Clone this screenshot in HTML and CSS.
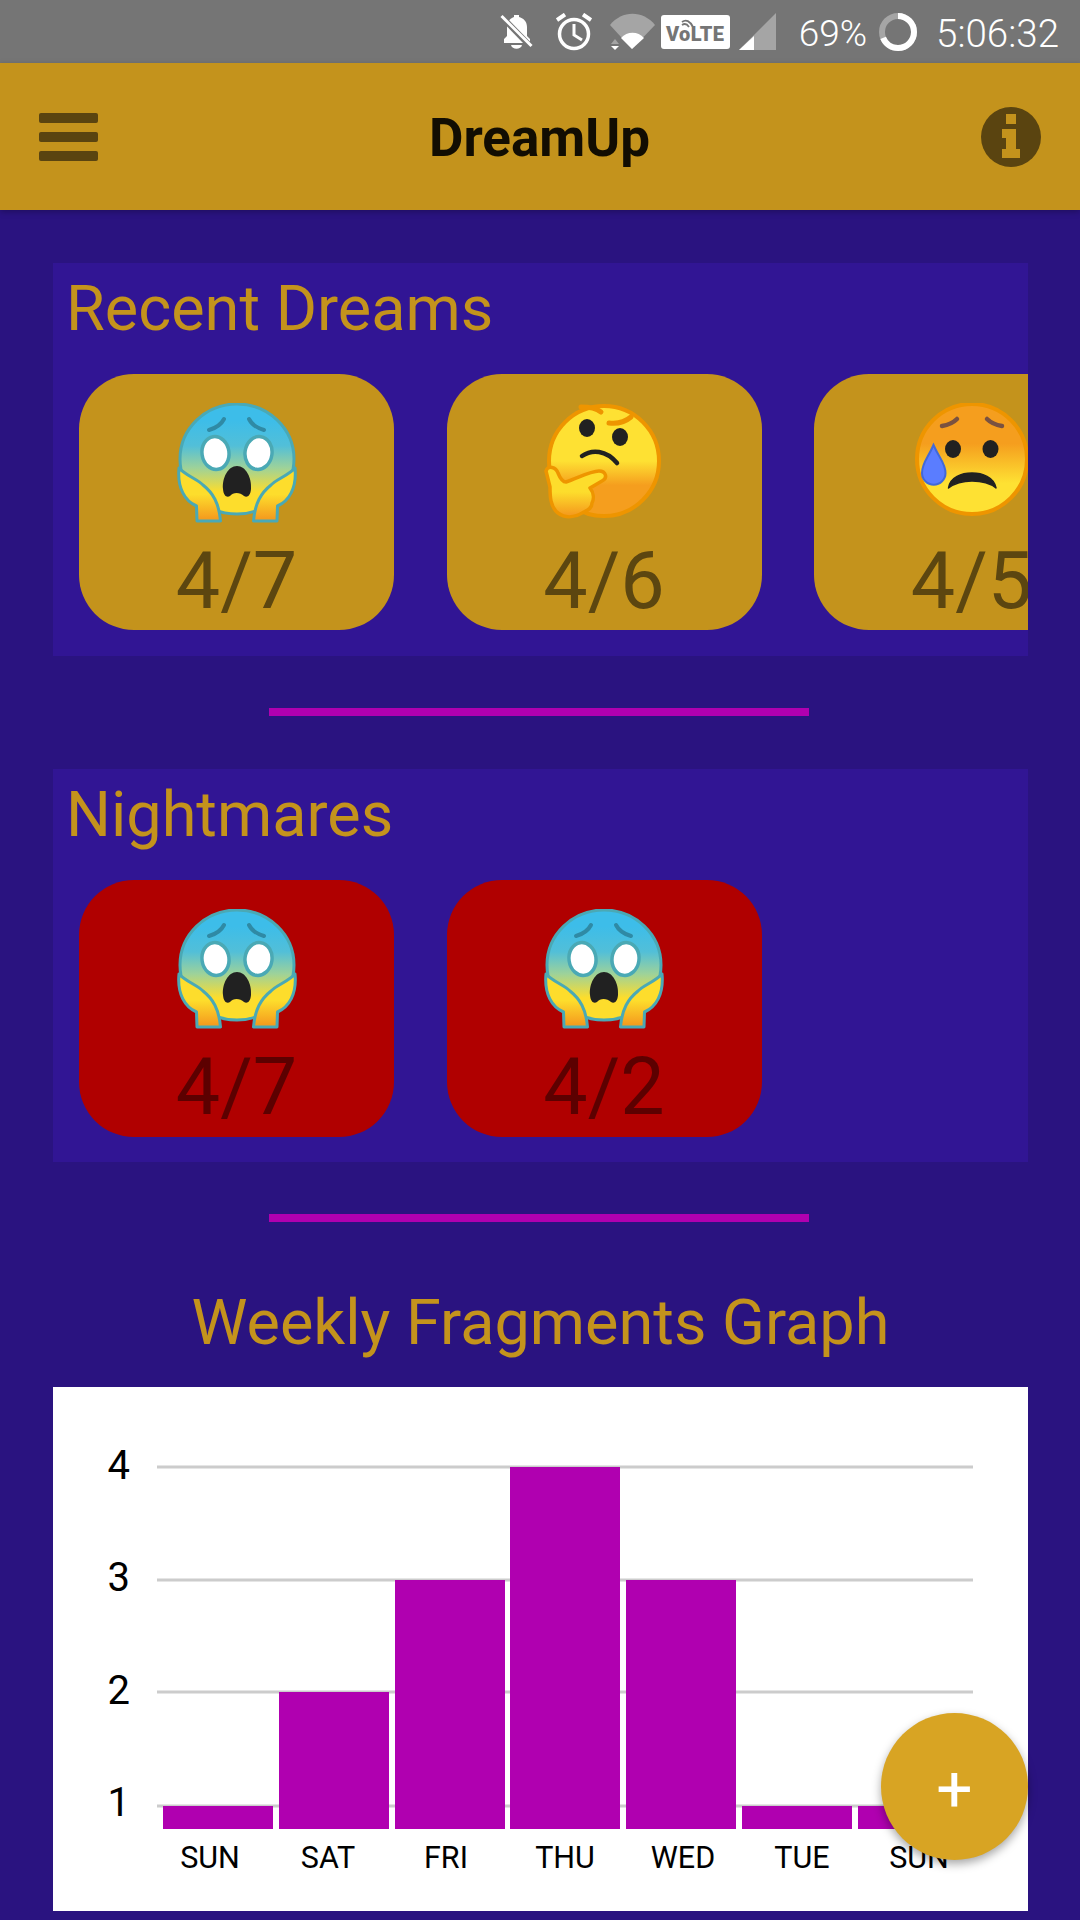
FILE: index.html
```html
<!DOCTYPE html>
<html lang="en">
<head>
  <meta charset="UTF-8" />
  <meta name="viewport" content="width=device-width, initial-scale=1.0" />
  <title>DreamUp</title>
  <link rel="stylesheet" href="styles.css">
</head>
<body>
  <!-- emoji faces, reused by the cards -->
  <svg class="defs" width="0" height="0">
    <defs>
      <linearGradient id="fearFace" x1="0" y1="0" x2="0" y2="1">
        <stop offset="0.15" stop-color="#3dbde9" />
        <stop offset="0.38" stop-color="#52bfd8" />
        <stop offset="0.58" stop-color="#9dd29a" />
        <stop offset="0.8" stop-color="#fddd2c" />
      </linearGradient>
      <linearGradient id="fearHand" x1="0" y1="0" x2="0" y2="1">
        <stop offset="0.5" stop-color="#fddd2c" />
        <stop offset="0.95" stop-color="#f59d1e" />
      </linearGradient>
      <linearGradient id="thinkFace" x1="0" y1="0" x2="0" y2="1">
        <stop offset="0.5" stop-color="#fee133" />
        <stop offset="0.72" stop-color="#f59e1e" />
      </linearGradient>
      <linearGradient id="sadFace" x1="0" y1="0" x2="0" y2="1">
        <stop offset="0.36" stop-color="#f59e1e" />
        <stop offset="0.72" stop-color="#fee133" />
      </linearGradient>

      <symbol id="fear" viewBox="0 0 120 120">
        <ellipse cx="60" cy="56" rx="57" ry="55" fill="url(#fearFace)" stroke="#4aa9b5" stroke-width="3" />
        <path d="M32 27 C39 25 44 22 47 16 M87 27 C80 25 75 22 72 16" fill="none" stroke="#2f8aa5" stroke-width="4" stroke-linecap="round" />
        <ellipse cx="38.5" cy="50" rx="13.500" ry="16.500" transform="rotate(-8 38.5 50)" fill="#fff" stroke="#4aa9b5" stroke-width="3.500" />
        <ellipse cx="81.5" cy="50" rx="13.500" ry="16.500" transform="rotate(8 81.5 50)" fill="#fff" stroke="#4aa9b5" stroke-width="3.500" />
        <path d="M60 63 C69 63 75 75 74 86 C73.500 93 70 95 67 93 C63 89 56 89 53 93 C50 95 46.500 93 46 86 C45 75 51 63 60 63 Z" fill="#212121" />
        <path id="fearHandL" d="M2 65 C8 72 20 76 26 82 C36 90 42 100 43.500 118 L20 118 L19.500 103 C8 98 0 85 2 65 Z" fill="url(#fearHand)" stroke="#4aa9b5" stroke-width="3" stroke-linejoin="round" />
        <use href="#fearHandL" transform="translate(120 0) scale(-1 1)" />
      </symbol>

      <symbol id="think" viewBox="0 0 120 120">
        <circle cx="60" cy="58" r="55" fill="url(#thinkFace)" stroke="#ee9500" stroke-width="4" />
        <path d="M37 4 C44 4 52 5 57 9 M65 20 C73 21 81 19 87 14" fill="none" stroke="#ee9500" stroke-width="5" stroke-linecap="round" />
        <ellipse cx="43" cy="25" rx="8" ry="9" fill="#212121" />
        <ellipse cx="76" cy="34" rx="8" ry="9" fill="#212121" />
        <path d="M38 53 C48 46 62 47 73 60" fill="none" stroke="#212121" stroke-width="4.500" stroke-linecap="round" />
        <path d="M2 68 C4 62 12 64 14 70 C16 75 18 79 22 79 C32 76 46 68 55 68 C62 68 64 75 58 78 L46 85 C50 90 50 96 48 100 C48 105 44 107 40 109 C32 114 22 116 14 110 C6 104 6 92 6 84 Z" fill="url(#fearHand)" stroke="#ee9500" stroke-width="3.500" stroke-linejoin="round" />
      </symbol>

      <symbol id="sad" viewBox="0 0 120 120">
        <circle cx="60" cy="56" r="55" fill="url(#sadFace)" stroke="#ee9500" stroke-width="4" />
        <path d="M30 23 C36 22 41 20 45 16 M75 16 C79 20 84 22 90 23" fill="none" stroke="#7a5240" stroke-width="4.500" stroke-linecap="round" />
        <ellipse cx="41" cy="46" rx="8" ry="9" fill="#212121" />
        <ellipse cx="78.500" cy="46" rx="8" ry="9" fill="#212121" />
        <path d="M36.500 85 C38 74 50 70 60 70 C70 70 82 74 84 85 C78 80 70 78 60 78 C50 78 43 80 36.500 85 Z" fill="#212121" stroke="#212121" stroke-width="1.500" stroke-linejoin="round" />
        <path d="M21.500 42 C16 55 10 60 10 70 A11.700 11.700 0 0 0 33.500 70 C33.500 60 27 55 21.500 42 Z" fill="#5a7dff" stroke="#4169d8" stroke-width="2" />
      </symbol>
    </defs>
  </svg>

  <div class="status-bar">
    <svg class="st-bell" width="33" height="38" viewBox="0 0 33 38">
      <path d="M4 26 L7 23 L7 14 C7 8 11 5 14 4 L14 2 L19 2 L19 4 C23 5 27 8 27 14 L27 23 L30 26 L30 30 L4 30 Z" fill="#fff" />
      <path d="M11 32 L22 32 C21 37 12 37 11 32 Z" fill="#fff" />
      <path d="M2 4 L31 34" stroke="#757575" stroke-width="6" />
      <path d="M1.500 3 L31.500 33" stroke="#fff" stroke-width="3" />
    </svg>
    <svg class="st-alarm" width="36" height="38" viewBox="0 0 36 38">
      <circle cx="18" cy="21" r="14.500" fill="none" stroke="#fff" stroke-width="3.500" />
      <path d="M18 11 L18 22 L26 27" fill="none" stroke="#fff" stroke-width="3" />
      <path d="M1 7 L9 1.500 M35 7 L27 1.500" stroke="#fff" stroke-width="4" />
    </svg>
    <svg class="st-wifi" width="45" height="37" viewBox="0 0 45 37">
      <path d="M0 12 C12 -3 33 -3 45 12 L22 36 Z" fill="#a5a5a5" />
      <path d="M11 25 C17 18 28 18 34 25 L22 36 Z" fill="#fff" />
      <path d="M5 26 L9 31 L1 31 Z" fill="#a5a5a5" />
      <path d="M1 33 L9 33 L5 37 Z" fill="#fff" />
    </svg>
    <div class="volte">
      VoLTE
      <svg class="volte-arcs" width="14" height="10" viewBox="0 0 14 10">
        <path d="M1 4 C5 1 9 3 12 9 M1 7 C4 5 6 6 8 9" fill="none" stroke="#757575" stroke-width="1.800" />
      </svg>
    </div>
    <svg class="st-signal" width="37" height="37" viewBox="0 0 37 37">
      <path d="M0 37 L37 0 L37 37 Z" fill="#a5a5a5" />
      <path d="M0 37 L15 23 L15 37 Z" fill="#fff" />
    </svg>
    <span class="st-text st-pct">69%</span>
    <svg class="st-ring" width="38" height="38" viewBox="0 0 38 38">
      <circle cx="19" cy="19" r="16" fill="none" stroke="#a5a5a5" stroke-width="6" />
      <circle cx="19" cy="19" r="16" fill="none" stroke="#fff" stroke-width="6" pathLength="100" stroke-dasharray="69 31" transform="rotate(-90 19 19)" />
    </svg>
    <span class="st-text st-time">5:06:32</span>
  </div>

  <header class="app-bar">
    <div class="menu-icon"><span></span><span></span><span></span></div>
    <h1 class="app-title">DreamUp</h1>
    <svg class="info-icon" width="60" height="60" viewBox="0 0 60 60">
      <circle cx="30" cy="30" r="30" fill="#5a4410" />
      <path d="M25 7 H35 V17 H25 Z M21 22 H35 V42 H39 V51 H21 V42 H25 V31 H21 Z" fill="#c4931c" />
    </svg>
  </header>

  <main class="content">
    <section class="panel">
      <h2 class="panel-title">Recent Dreams</h2>
      <div class="card-row">
        <div class="card">
          <svg class="emoji"><use href="#fear" /></svg>
          <div class="card-date">4/7</div>
        </div>
        <div class="card">
          <svg class="emoji"><use href="#think" /></svg>
          <div class="card-date">4/6</div>
        </div>
        <div class="card">
          <svg class="emoji"><use href="#sad" /></svg>
          <div class="card-date">4/5</div>
        </div>
      </div>
    </section>

    <div class="divider"></div>

    <section class="panel">
      <h2 class="panel-title">Nightmares</h2>
      <div class="card-row">
        <div class="card nightmare">
          <svg class="emoji"><use href="#fear" /></svg>
          <div class="card-date">4/7</div>
        </div>
        <div class="card nightmare">
          <svg class="emoji"><use href="#fear" /></svg>
          <div class="card-date">4/2</div>
        </div>
      </div>
    </section>

    <div class="divider"></div>

    <h2 class="graph-title">Weekly Fragments Graph</h2>
    <div class="chart">
      <svg width="975" height="524" viewBox="0 0 975 524">
        <g class="grid">
          <line x1="104" x2="920" y1="80" y2="80" />
          <line x1="104" x2="920" y1="193" y2="193" />
          <line x1="104" x2="920" y1="305" y2="305" />
          <line x1="104" x2="920" y1="419" y2="419" />
        </g>
        <g class="bars">
          <rect x="110" y="419" width="110" height="23" />
          <rect x="226" y="305" width="110" height="137" />
          <rect x="342" y="193" width="110" height="249" />
          <rect x="457" y="80" width="110" height="362" />
          <rect x="573" y="193" width="110" height="249" />
          <rect x="689" y="419" width="110" height="23" />
          <rect x="805" y="419" width="110" height="23" />
        </g>
        <g class="y-labels">
          <text x="77" y="92">4</text>
          <text x="77" y="204">3</text>
          <text x="77" y="317">2</text>
          <text x="77" y="429">1</text>
        </g>
        <g class="x-labels">
          <text x="157" y="481">SUN</text>
          <text x="275" y="481">SAT</text>
          <text x="393" y="481">FRI</text>
          <text x="512" y="481">THU</text>
          <text x="630" y="481">WED</text>
          <text x="749" y="481">TUE</text>
          <text x="866" y="481">SUN</text>
        </g>
      </svg>
    </div>
  </main>

  <button class="fab">+</button>
</body>
</html>
```

FILE: styles.css
```css
* {
  box-sizing: border-box;
}
html, body {
  margin: 0;
  height: 1920px;
  overflow: hidden;
}
body {
  font-family: Roboto, "Liberation Sans", sans-serif;
  background-color: #2a1380;
  position: relative;
}
.defs {
  position: absolute;
}

/* status bar */
.status-bar {
  height: 63px;
  background-color: #757575;
  display: flex;
  align-items: center;
  justify-content: flex-end;
  padding-right: 21px;
  color: white;
}
.st-alarm {
  margin-left: 23px;
}
.st-wifi {
  margin-left: 18px;
}
.volte {
  position: relative;
  margin-left: 6px;
  width: 69px;
  height: 34px;
  background: white;
  border-radius: 3px;
  color: #757575;
  font-size: 20px;
  font-weight: 900;
  line-height: 38px;
  text-align: center;
  letter-spacing: 0.3px;
}
.volte-arcs {
  position: absolute;
  left: 20px;
  top: 3px;
}
.st-signal {
  margin-left: 9px;
}
.st-text {
  font-weight: 300;
  line-height: 63px;
  padding-top: 3px;
}
.st-pct {
  margin-left: 23px;
  font-size: 37px;
}
.st-ring {
  margin-left: 12px;
}
.st-time {
  margin-left: 19px;
  font-size: 38.5px;
}

/* app bar */
.app-bar {
  height: 147px;
  background-color: #c4931c;
  display: flex;
  align-items: center;
  justify-content: space-between;
  padding: 0 39px;
  position: relative;
  box-shadow: 0 2px 6px rgba(0,0,0,0.25);
}
.menu-icon {
  width: 59px;
  display: flex;
  flex-direction: column;
  gap: 9px;
}
.menu-icon span {
  height: 10px;
  background-color: #5a4410;
  border-radius: 2px;
}
.app-title {
  margin: 3px 0 0;
  font-size: 53px;
  font-weight: 700;
  color: #120d02;
}

/* sections */
.content {
  padding: 53px 52px 0 53px;
}
.panel {
  height: 393px;
  background-color: #311594;
  padding-top: 11px;
}
.panel-title {
  margin: 0 0 30px;
  padding-left: 13px;
  font-size: 63px;
  font-weight: 400;
  line-height: 70px;
  color: #c4931c;
}
.card-row {
  display: flex;
  gap: 52.5px;
  padding-left: 26px;
  overflow: hidden;
}
.card {
  flex: 0 0 315px;
  height: 256px;
  padding-top: 29px;
  background-color: #c4931c;
  border-radius: 55px;
  display: flex;
  flex-direction: column;
  align-items: center;
}
.card.nightmare {
  height: 257px;
  background-color: #b00000;
}
.emoji {
  width: 120px;
  height: 120px;
  flex: none;
}
.card-date {
  margin-top: 11px;
  font-size: 79px;
  line-height: 94px;
  color: #5c4610;
}
.nightmare .card-date {
  color: #5c0000;
}
.divider {
  width: 540px;
  height: 8px;
  margin: 52px 0 53px 216px;
  background-color: #b000b0;
}
.graph-title {
  margin: 66px 0 29px;
  font-size: 63px;
  font-weight: 400;
  line-height: 70px;
  text-align: center;
  color: #c4931c;
}

/* chart */
.chart {
  width: 975px;
  height: 524px;
  background: white;
}
.chart svg {
  display: block;
}
.grid line {
  stroke: #cccccc;
  stroke-width: 3;
}
.bars rect {
  fill: #b000b0;
}
.y-labels text {
  font-size: 40px;
  text-anchor: end;
  fill: #000;
}
.x-labels text {
  font-size: 30.5px;
  text-anchor: middle;
  fill: #000;
}

/* add button */
.fab {
  position: absolute;
  right: 52px;
  bottom: 60px;
  width: 147px;
  height: 147px;
  border: none;
  border-radius: 50%;
  background-color: #d8a423;
  color: white;
  font-family: Roboto, sans-serif;
  font-size: 64px;
  line-height: 147px;
  padding: 3px 0 0;
  box-shadow: 0 4px 10px rgba(0,0,0,0.35);
}
```
